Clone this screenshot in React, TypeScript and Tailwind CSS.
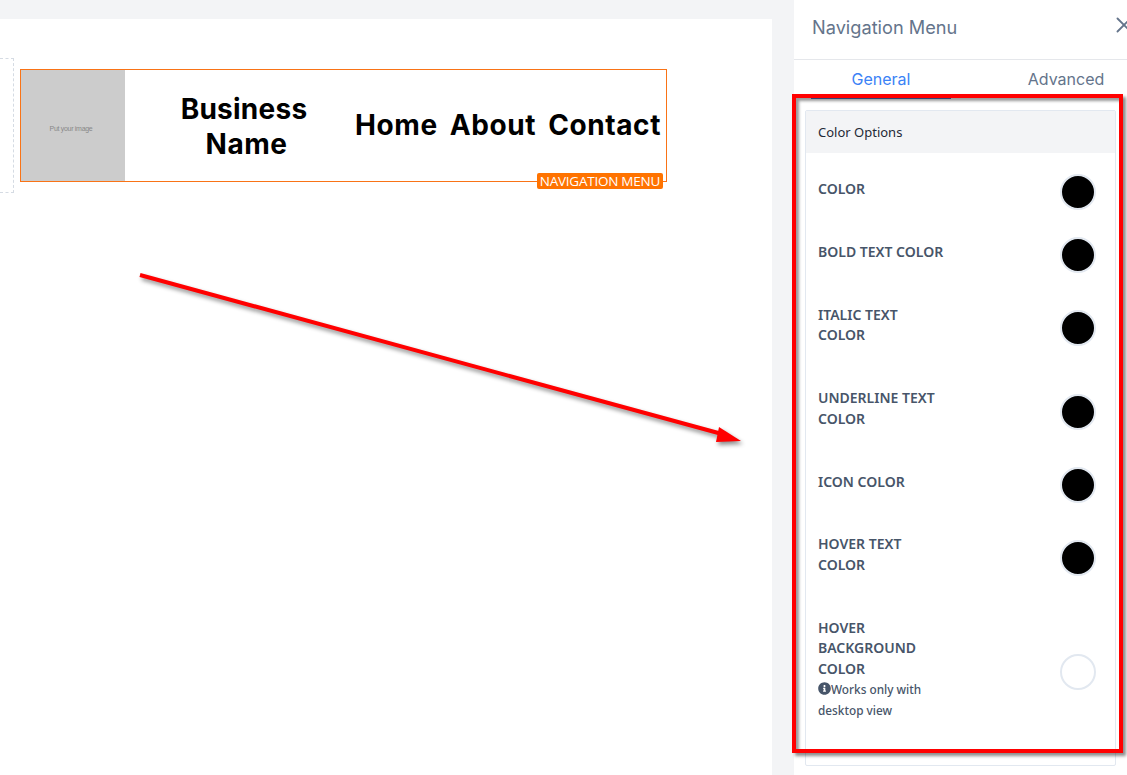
import { X } from "lucide-react";
import { FaInfoCircle } from "react-icons/fa";

const ROWS: { label: string; empty?: boolean; note?: boolean }[] = [
  { label: "COLOR" },
  { label: "BOLD TEXT COLOR" },
  { label: "ITALIC TEXT COLOR" },
  { label: "UNDERLINE TEXT COLOR" },
  { label: "ICON COLOR" },
  { label: "HOVER TEXT COLOR" },
  { label: "HOVER BACKGROUND COLOR", empty: true, note: true },
];

function ColorRow({ label, empty, note }: { label: string; empty?: boolean; note?: boolean }) {
  return (
    <div className="flex items-center justify-between pl-3 pr-[19px]">
      <div className="w-[126px] pt-[17px] pb-[25.4px] font-['Noto_Sans',sans-serif] text-[14px] leading-[20.5px] font-semibold text-[#475569]">
        <div className={note ? "w-[100px]" : ""}>{label}</div>
        {note && (
          <div className="text-[11.8px] font-medium">
            <FaInfoCircle className="inline-block w-[13px] h-[13px] align-[-1px]" />
            Works only with desktop view
          </div>
        )}
      </div>
      <div
        className={
          empty
            ? "mb-[2px] w-9 h-9 rounded-full border-2 border-[#e2e8f0] bg-white"
            : "mb-[2px] w-9 h-9 rounded-full border-2 border-[#e2e8f0] bg-black"
        }
      />
    </div>
  );
}

export default function App() {
  return (
    <div className="relative flex h-[775px] w-[1127px] overflow-hidden bg-[#f3f4f6]">
      {/* Canvas */}
      <div className="mt-[19px] w-[772px] shrink-0 bg-white">
        <div className="flex items-start pt-[39px]">
          <div className="h-[135px] w-[14px] border border-l-0 border-dashed border-[#d5dbe3]" />
          <div className="relative ml-[6px] mt-[11px] flex h-[113px] w-[647px] border border-[#f97316] font-['Inter',sans-serif] font-bold text-black">
            <div className="flex w-[104px] shrink-0 items-center justify-center bg-[#cccccc] pt-[8px] pr-[4px] font-['Liberation_Sans',sans-serif] text-[7px] font-normal tracking-[-0.3px] text-[#888888]">
              Put your image
            </div>
            <div className="ml-[50px] mt-[22px] w-[143px] text-center text-[28px] leading-[35px]">
              <div className="pr-[5px] tracking-[0.25px]">Business</div>
              <div className="tracking-[0.5px]">Name</div>
            </div>
            <div className="ml-[37px] flex items-center gap-[12px] pb-[2px] text-[28px] tracking-[0.6px]">
              <span>Home</span>
              <span>About</span>
              <span>Contact</span>
            </div>
            <span className="absolute right-[3px] top-[103px] rounded-[2px] bg-[#ff7300] px-[3px] font-['Open_Sans',sans-serif] text-[13.5px] leading-[16px] font-normal tracking-[-0.25px] text-white">
              NAVIGATION MENU
            </span>
          </div>
        </div>
      </div>

      {/* Settings panel */}
      <div className="ml-[22px] flex w-[333px] shrink-0 flex-col overflow-hidden bg-white">
        <div className="flex h-[60px] w-[343px] shrink-0 items-center justify-between border-b border-[#e5e7eb] pb-[4px] pl-[18px] font-['Inter',sans-serif]">
          <span className="text-[18.2px] text-[#64748b]">Navigation Menu</span>
          <X className="-mt-[5px] h-[26px] w-[26px] text-[#64748b]" strokeWidth={1.7} />
        </div>
        <div className="flex h-[39px] shrink-0 gap-[45px] pl-[17px] font-['Inter',sans-serif] text-[16px]">
          <div className="w-[140px] shrink-0 border-b-2 border-[#4f6fbf] pt-[7px] text-center text-[#3b82f6]">General</div>
          <div className="w-[140px] shrink-0 pt-[7px] text-center text-[#64748b]">Advanced</div>
        </div>
        <div className="mx-[11px] mt-[11px] h-[656px] w-[311px] rounded-[2px] border border-[#e2e8f0]">
          <div className="flex h-[42px] items-center bg-[#f3f4f6] pl-3 pt-[1px] font-['Noto_Sans',sans-serif] text-[13px] text-[#1f2937]">
            Color Options
          </div>
          <div className="pt-[9px]">
            {ROWS.map((r) => (
              <ColorRow key={r.label} {...r} />
            ))}
          </div>
        </div>
      </div>

      {/* Red annotation */}
      <div className="absolute left-[792px] top-[94px] h-[659px] w-[331px] border-4 border-[#ff0000] shadow-[3px_3px_3px_rgba(0,0,0,0.45),inset_3px_3px_3px_rgba(0,0,0,0.4)]" />
      <svg className="absolute left-0 top-0 drop-shadow-[2px_3px_2px_rgba(0,0,0,0.45)]" width="1127" height="775" viewBox="0 0 1127 775" fill="none">
        <line x1="140" y1="275" x2="722" y2="434" stroke="#ff0000" strokeWidth="4" />
        <polygon points="719,427 741,441 716,442" fill="#ff0000" />
      </svg>
    </div>
  );
}
